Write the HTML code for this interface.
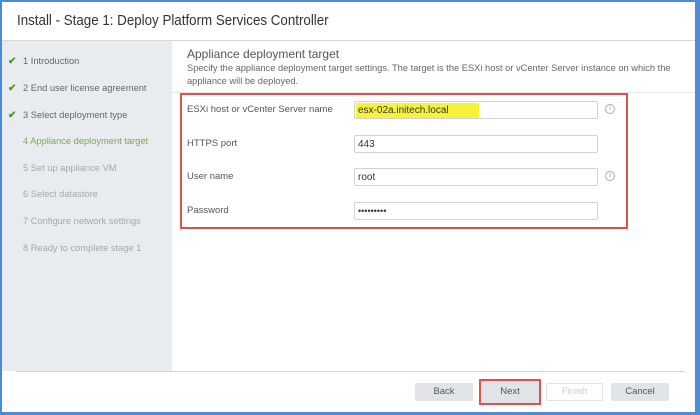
<!DOCTYPE html>
<html><head><style>
*{margin:0;padding:0;box-sizing:border-box}
body{width:700px;height:415px;position:relative;background:#fff;font-family:"Liberation Sans",sans-serif;overflow:hidden}
.frame{position:absolute;left:0;top:0;width:700px;height:415px;border-left:2px solid #4f8ad6;border-top:2px solid #4f8ad6;border-right:5px solid #4f8ad6;border-bottom:3px solid #4f8ad6}
.title{position:absolute;left:17px;top:12px;font-size:15px;color:#333;transform:scaleX(0.89);transform-origin:left top;white-space:nowrap}
.hdrline{position:absolute;left:2px;right:5px;top:40px;height:1px;background:#d6d9dc}
.side{position:absolute;left:2px;top:41px;width:170px;height:330px;background:#e9ecef}
.step{position:absolute;left:23px;font-size:9.3px;color:#666}
.step.dis{color:#a4a8ab}
.step.cur{color:#7aa852}
.chk{position:absolute;left:8px;font-size:10px;color:#4e9a1c;font-weight:bold}
.h{position:absolute;left:187px;top:47px;font-size:12px;color:#555}
.sub{position:absolute;left:187px;top:62px;font-size:9.3px;color:#666;line-height:13px;width:495px}
.sep{position:absolute;left:172px;right:5px;top:92px;height:1px;background:#e4e6e8}
.red{position:absolute;left:180px;top:93px;width:448px;height:136px;border:2px solid #d9534f}
.lbl{position:absolute;left:187px;font-size:9.5px;color:#555}
.inp{position:absolute;left:354px;width:244px;height:18px;border:1px solid #cfd3d6;border-radius:2px;font-size:10px;color:#333;padding:3px 0 0 3px}
.info{position:absolute;left:605px;width:10px;height:10px;border:1px solid #aaa;border-radius:50%;font-size:7px;color:#999;text-align:center;line-height:8px}
.foot{position:absolute;left:16px;right:15px;top:371px;height:1px;background:#d0d4d7}
.btn{position:absolute;top:383px;height:18px;background:#e1e4e7;font-size:9.5px;color:#555;text-align:center;line-height:18px;border-radius:2px}
</style></head><body>
<div class="title">Install - Stage 1: Deploy Platform Services Controller</div>
<div class="hdrline"></div>
<div class="side"></div>
<div class="chk" style="top:56px">✔</div><div class="step" style="top:56px">1 Introduction</div>
<div class="chk" style="top:83px">✔</div><div class="step" style="top:83px">2 End user license agreement</div>
<div class="chk" style="top:110px">✔</div><div class="step" style="top:110px">3 Select deployment type</div>
<div class="step cur" style="top:136px">4 Appliance deployment target</div>
<div class="step dis" style="top:163px">5 Set up appliance VM</div>
<div class="step dis" style="top:189px">6 Select datastore</div>
<div class="step dis" style="top:216px">7 Configure network settings</div>
<div class="step dis" style="top:243px">8 Ready to complete stage 1</div>
<div class="h">Appliance deployment target</div>
<div class="sub">Specify the appliance deployment target settings. The target is the ESXi host or vCenter Server instance on which the appliance will be deployed.</div>
<div class="sep"></div>
<div class="red"></div>
<div class="lbl" style="top:104px">ESXi host or vCenter Server name</div>
<div class="inp" style="top:101px"><span style="background:#f4f23a;padding:2px 30px 2px 2px;margin-left:-2px">esx-02a.initech.local</span></div>
<div class="info" style="top:104px">i</div>
<div class="lbl" style="top:138px">HTTPS port</div>
<div class="inp" style="top:135px">443</div>
<div class="lbl" style="top:171px">User name</div>
<div class="inp" style="top:168px">root</div>
<div class="info" style="top:171px">i</div>
<div class="lbl" style="top:205px">Password</div>
<div class="inp" style="top:202px;font-size:9px;padding-top:3px">•••••••••</div>
<div class="foot"></div>
<div class="btn" style="left:415px;width:58px">Back</div>
<div class="btn" style="left:479px;width:62px;top:379px;height:26px;line-height:22px;border:2px solid #d9534f;border-radius:0;background:#e1e4e7">Next</div>
<div class="btn" style="left:546px;width:57px;background:#fff;border:1px solid #e1e4e7;color:#c8ccd0;line-height:16px">Finish</div>
<div class="btn" style="left:611px;width:58px">Cancel</div>
<div class="frame"></div>
</body></html>
